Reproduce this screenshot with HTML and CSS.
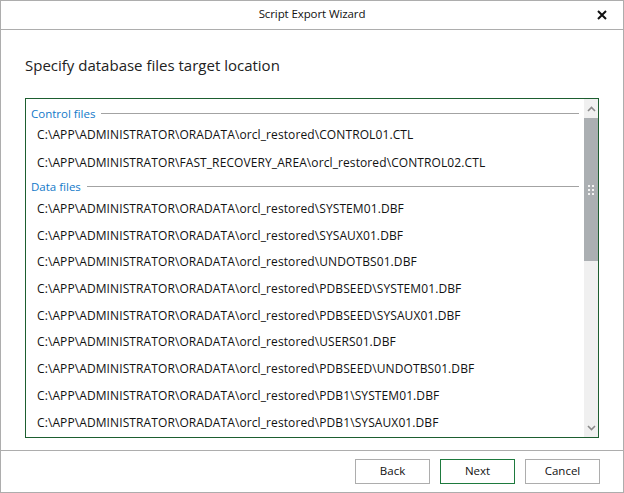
FILE: index.html
```html
<!DOCTYPE html>
<html>
<head>
<meta charset="utf-8">
<link rel="stylesheet" href="styles.css">
</head>
<body>
<div class="window">
  <div class="titlebar">
    <span class="title">Script Export Wizard</span>
    <span class="close">
      <svg width="10" height="10" viewBox="0 0 10 10"><path d="M1 1L9 9M9 1L1 9" stroke="#111" stroke-width="2"/></svg>
    </span>
  </div>
  <div class="main">
    <h1 class="heading">Specify database files target location</h1>
    <div class="listbox">
      <div class="list">
        <div class="group first"><span class="gname">Control files</span><span class="gline"></span></div>
        <div class="item ctl">C:\APP\ADMINISTRATOR\ORADATA\orcl_restored\CONTROL01.CTL</div>
        <div class="item ctl">C:\APP\ADMINISTRATOR\FAST_RECOVERY_AREA\orcl_restored\CONTROL02.CTL</div>
        <div class="group second"><span class="gname">Data files</span><span class="gline"></span></div>
        <div class="item">C:\APP\ADMINISTRATOR\ORADATA\orcl_restored\SYSTEM01.DBF</div>
        <div class="item">C:\APP\ADMINISTRATOR\ORADATA\orcl_restored\SYSAUX01.DBF</div>
        <div class="item">C:\APP\ADMINISTRATOR\ORADATA\orcl_restored\UNDOTBS01.DBF</div>
        <div class="item">C:\APP\ADMINISTRATOR\ORADATA\orcl_restored\PDBSEED\SYSTEM01.DBF</div>
        <div class="item">C:\APP\ADMINISTRATOR\ORADATA\orcl_restored\PDBSEED\SYSAUX01.DBF</div>
        <div class="item">C:\APP\ADMINISTRATOR\ORADATA\orcl_restored\USERS01.DBF</div>
        <div class="item">C:\APP\ADMINISTRATOR\ORADATA\orcl_restored\PDBSEED\UNDOTBS01.DBF</div>
        <div class="item">C:\APP\ADMINISTRATOR\ORADATA\orcl_restored\PDB1\SYSTEM01.DBF</div>
        <div class="item">C:\APP\ADMINISTRATOR\ORADATA\orcl_restored\PDB1\SYSAUX01.DBF</div>
      </div>
      <div class="scrollbar">
        <div class="sbtn">
          <svg width="9" height="6" viewBox="0 0 9 6"><path d="M1 5L4.5 1.5L8 5" fill="none" stroke="#8a8a8a" stroke-width="1.6"/></svg>
        </div>
        <div class="thumb">
          <div class="grip"><i></i><i></i><i></i><i></i><i></i><i></i></div>
        </div>
        <div class="track"></div>
        <div class="sbtn">
          <svg width="9" height="6" viewBox="0 0 9 6"><path d="M1 1L4.5 4.5L8 1" fill="none" stroke="#8a8a8a" stroke-width="1.6"/></svg>
        </div>
      </div>
    </div>
  </div>
  <div class="footer">
    <button class="btn">Back</button>
    <button class="btn primary">Next</button>
    <button class="btn">Cancel</button>
  </div>
</div>
</body>
</html>
```

FILE: styles.css
```css
* { box-sizing: border-box; }
html, body { margin: 0; padding: 0; background: #fff; }
body { font-family: "Open Sans", "Noto Sans", sans-serif; color: #1a1a1a; }

.window {
  width: 624px;
  height: 493px;
  border: 1px solid #adadad;
  display: flex;
  flex-direction: column;
  background: #fff;
}

.titlebar {
  height: 29px;
  flex: none;
  border-bottom: 1px solid #adadad;
  display: flex;
  align-items: center;
  justify-content: center;
  padding-bottom: 3px;
  position: relative;
}
.title { font-size: 11.5px; color: #111; letter-spacing: -0.1px; }
.close {
  position: absolute;
  right: 16px;
  top: 9px;
  width: 10px;
  height: 10px;
  display: flex;
}

.main {
  flex: 1;
  padding: 0 24px 0 24px;
  display: flex;
  flex-direction: column;
}
.heading {
  margin: 24px 0 0 0;
  height: 44px;
  font-size: 15px;
  font-weight: 400;
  color: #222;
  line-height: 22px;
}

.listbox {
  height: 340px;
  border: 1px solid #1d5e30;
  display: flex;
  overflow: hidden;
}
.list {
  flex: 1;
  padding-left: 5px;
  padding-right: 5px;
}
.group {
  display: flex;
  align-items: center;
  height: 18px;
  margin-top: 0;
}
.group.first { margin-top: 5px; }
.gname {
  font-size: 11.5px;
  color: #1279c9;
  white-space: nowrap;
}
.gline {
  flex: 1;
  height: 1px;
  background: #a3a3a3;
  margin-left: 6px;
  margin-top: 1px;
}
.item {
  height: 26.7px;
  line-height: 26.7px;
  padding-left: 6px;
  font-size: 12px;
  color: #111;
  white-space: nowrap;
  letter-spacing: 0.1px;
}
.item.ctl { height: 28px; line-height: 28px; }
.group.first + .item { margin-top: -1px; }
.group.second + .item { margin-top: 1px; }

.scrollbar {
  width: 14px;
  flex: none;
  background: #f0f0f0;
  display: flex;
  flex-direction: column;
}
.sbtn {
  height: 19px;
  display: flex;
  align-items: center;
  justify-content: center;
}
.thumb {
  height: 143px;
  background: #abafb2;
  display: flex;
  align-items: center;
  justify-content: center;
}
.grip {
  display: grid;
  grid-template-columns: 2px 2px;
  grid-auto-rows: 2px;
  gap: 2px;
}
.grip i { background: #f2f2f2; display: block; }
.track { flex: 1; }

.footer {
  height: 42px;
  flex: none;
  border-top: 1px solid #adadad;
  display: flex;
  justify-content: flex-end;
  align-items: flex-start;
  padding: 8px 23px 0 0;
  gap: 10px;
}
.btn {
  width: 75px;
  height: 25px;
  border: 1px solid #adadad;
  background: #fff;
  font-family: "Open Sans", "Noto Sans", sans-serif;
  font-size: 11.5px;
  color: #111;
  padding: 0 0 2px 0;
}
.btn.primary { border-color: #1e7a3e; }
```
